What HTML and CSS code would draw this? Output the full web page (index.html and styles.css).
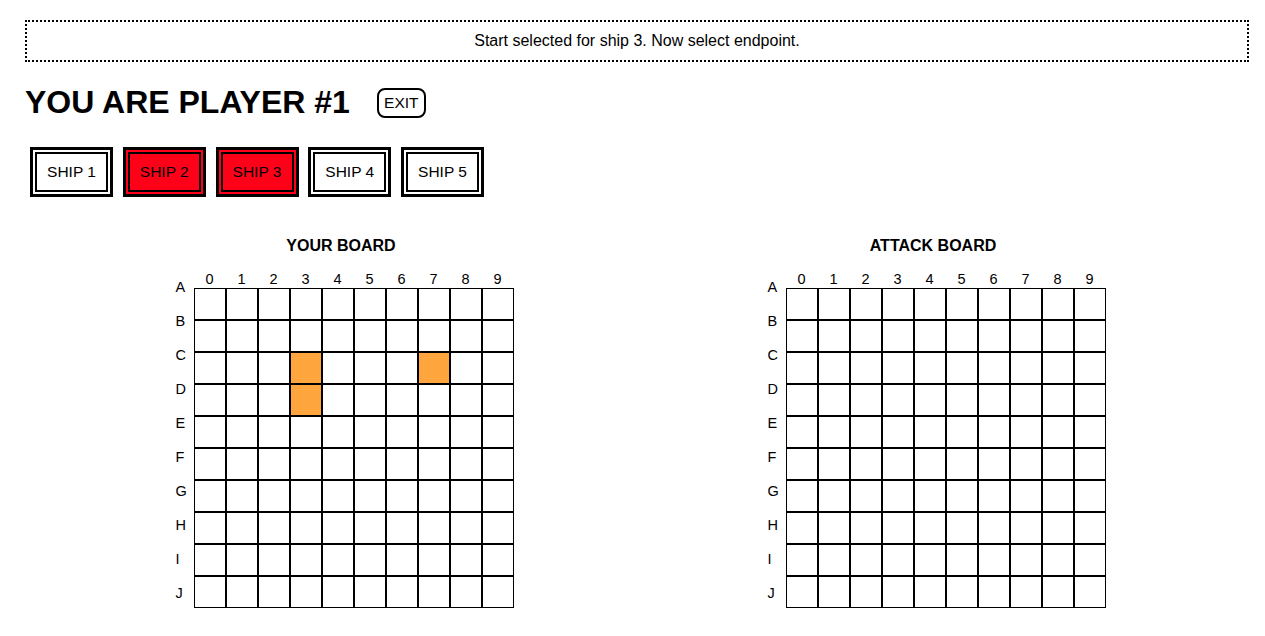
FILE: index.html
```html
<!DOCTYPE html>
<html>
<head>
<meta charset="utf-8">
<title>Battleship</title>
<link rel="stylesheet" href="styles.css">
</head>
<body>
<div class="app">
  <div class="status">Start selected for ship 3. Now select endpoint.</div>

  <div class="title-row">
    <h1 class="title">YOU ARE PLAYER #1</h1>
    <button class="exit">EXIT</button>
  </div>

  <div class="ships">
    <button class="ship">SHIP 1</button>
    <button class="ship ship-active">SHIP 2</button>
    <button class="ship ship-active">SHIP 3</button>
    <button class="ship">SHIP 4</button>
    <button class="ship">SHIP 5</button>
  </div>

  <div class="boards">
    <section class="board-col">
      <div class="board-block">
        <h2 class="board-title">YOUR BOARD</h2>
        <div class="board">
          <div class="row-labels">
            <div>A</div><div>B</div><div>C</div><div>D</div><div>E</div><div>F</div><div>G</div><div>H</div><div>I</div><div>J</div>
          </div>
          <div class="grid-wrap">
            <div class="col-labels">
              <span>0</span><span>1</span><span>2</span><span>3</span><span>4</span><span>5</span><span>6</span><span>7</span><span>8</span><span>9</span>
            </div>
            <table class="grid">
              <tr><td></td><td></td><td></td><td></td><td></td><td></td><td></td><td></td><td></td><td></td></tr>
              <tr><td></td><td></td><td></td><td></td><td></td><td></td><td></td><td></td><td></td><td></td></tr>
              <tr><td></td><td></td><td></td><td class="ship-cell"></td><td></td><td></td><td></td><td class="ship-cell"></td><td></td><td></td></tr>
              <tr><td></td><td></td><td></td><td class="ship-cell"></td><td></td><td></td><td></td><td></td><td></td><td></td></tr>
              <tr><td></td><td></td><td></td><td></td><td></td><td></td><td></td><td></td><td></td><td></td></tr>
              <tr><td></td><td></td><td></td><td></td><td></td><td></td><td></td><td></td><td></td><td></td></tr>
              <tr><td></td><td></td><td></td><td></td><td></td><td></td><td></td><td></td><td></td><td></td></tr>
              <tr><td></td><td></td><td></td><td></td><td></td><td></td><td></td><td></td><td></td><td></td></tr>
              <tr><td></td><td></td><td></td><td></td><td></td><td></td><td></td><td></td><td></td><td></td></tr>
              <tr><td></td><td></td><td></td><td></td><td></td><td></td><td></td><td></td><td></td><td></td></tr>
            </table>
          </div>
        </div>
      </div>
    </section>

    <section class="board-col">
      <div class="board-block">
        <h2 class="board-title">ATTACK BOARD</h2>
        <div class="board">
          <div class="row-labels">
            <div>A</div><div>B</div><div>C</div><div>D</div><div>E</div><div>F</div><div>G</div><div>H</div><div>I</div><div>J</div>
          </div>
          <div class="grid-wrap">
            <div class="col-labels">
              <span>0</span><span>1</span><span>2</span><span>3</span><span>4</span><span>5</span><span>6</span><span>7</span><span>8</span><span>9</span>
            </div>
            <table class="grid">
              <tr><td></td><td></td><td></td><td></td><td></td><td></td><td></td><td></td><td></td><td></td></tr>
              <tr><td></td><td></td><td></td><td></td><td></td><td></td><td></td><td></td><td></td><td></td></tr>
              <tr><td></td><td></td><td></td><td></td><td></td><td></td><td></td><td></td><td></td><td></td></tr>
              <tr><td></td><td></td><td></td><td></td><td></td><td></td><td></td><td></td><td></td><td></td></tr>
              <tr><td></td><td></td><td></td><td></td><td></td><td></td><td></td><td></td><td></td><td></td></tr>
              <tr><td></td><td></td><td></td><td></td><td></td><td></td><td></td><td></td><td></td><td></td></tr>
              <tr><td></td><td></td><td></td><td></td><td></td><td></td><td></td><td></td><td></td><td></td></tr>
              <tr><td></td><td></td><td></td><td></td><td></td><td></td><td></td><td></td><td></td><td></td></tr>
              <tr><td></td><td></td><td></td><td></td><td></td><td></td><td></td><td></td><td></td><td></td></tr>
              <tr><td></td><td></td><td></td><td></td><td></td><td></td><td></td><td></td><td></td><td></td></tr>
            </table>
          </div>
        </div>
      </div>
    </section>
  </div>
</div>
</body>
</html>
```

FILE: styles.css
```css
html, body {
  margin: 0;
  padding: 0;
  background: #fff;
}

body {
  font-family: "Liberation Sans", Arial, Helvetica, sans-serif;
  color: #000;
}

.app {
  width: 1224px;
  padding: 20px 0 0 25px;
}

.status {
  border: 2px dotted #000;
  height: 38px;
  line-height: 38px;
  text-align: center;
  font-size: 16px;
}

.title-row {
  display: flex;
  align-items: center;
  margin-top: 22px;
  height: 37px;
}

.title {
  margin: 0;
  font-size: 32px;
  line-height: 37px;
  font-weight: bold;
}

.exit {
  margin-left: 27px;
  width: 49px;
  height: 30px;
  padding: 0;
  border: 2px solid #000;
  border-radius: 8px;
  background: #fff;
  font-family: inherit;
  font-size: 15.5px;
  color: #000;
  line-height: 26px;
}

.ships {
  display: flex;
  gap: 9.75px;
  margin-top: 26px;
  padding-left: 5px;
}

.ship {
  --fill: #fff;
  width: 83px;
  height: 50px;
  padding: 0;
  border: 3px solid #000;
  box-shadow: inset 0 0 0 2px var(--fill), inset 0 0 0 4px #000;
  background: var(--fill);
  font-family: inherit;
  font-size: 15.5px;
  color: #000;
}

.ship-active {
  --fill: #ff0019;
}

.boards {
  display: grid;
  grid-template-columns: 592px 592px;
  padding: 0 20px;
  margin-top: 40px;
}

.board-col {
  display: flex;
  justify-content: center;
}

.board-block {
  display: flex;
  flex-direction: column;
  align-items: center;
}

.board-title {
  margin: 0;
  font-size: 16px;
  line-height: 18px;
  font-weight: bold;
}

.board {
  display: flex;
  margin-top: 15px;
}

.row-labels {
  width: 25px;
  font-size: 14.5px;
}

.row-labels div {
  height: 34px;
  line-height: 34px;
  padding-left: 7px;
}

.grid-wrap {
  display: flex;
  flex-direction: column;
}

.col-labels {
  display: flex;
  height: 18px;
  font-size: 14.5px;
  line-height: 18px;
}

.col-labels span {
  width: 32px;
  text-align: center;
}

.grid {
  border-collapse: separate;
  border-spacing: 0;
}

.grid td {
  width: 30px;
  height: 30px;
  padding: 0;
  border: 1px solid #000;
  box-sizing: content-box;
}

.grid td.ship-cell {
  background: #ffa53d;
}
```
